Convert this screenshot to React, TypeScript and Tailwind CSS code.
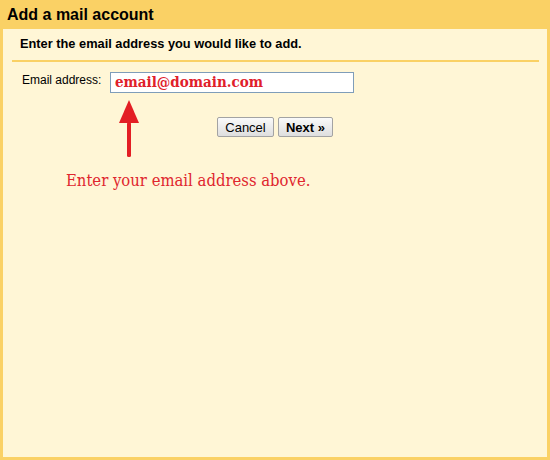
export default function App() {
  return (
    <div className="flex h-[460px] w-[550px] flex-col bg-[#fad165] px-[3px] pb-[3px] font-['Liberation_Sans',Arial,sans-serif] text-black">
      <div className="flex h-[29px] items-center pl-[4px] text-[16px] font-bold">
        Add a mail account
      </div>
      <div className="relative flex-1 bg-[#fff6d6]">
        <div className="ml-[9px] mr-[8px] border-b-2 border-[#fad165] pb-[9px] pl-[8px] pt-[7px] text-[12.8px] font-bold leading-[15px]">
          Enter the email address you would like to add.
        </div>

        <div className="ml-[19px] mt-[10px] flex items-start">
          <span className="w-[88px] pt-[1px] text-[12px] leading-[14px]">Email address:</span>
          <input
            readOnly
            defaultValue="email@domain.com"
            className="h-[21px] w-[244px] border border-[#7f9db9] bg-white px-[4px] font-['DejaVu_Serif_Condensed','DejaVu_Serif',serif] text-[15px] font-bold text-[#e0202a] outline-none"
          />
        </div>

        <div className="mt-[24px] flex justify-center gap-[4px] text-[13px]">
          <button className="h-[20px] w-[57px] rounded-[2px] border border-[#a3a3a3] bg-gradient-to-b from-[#fafafa] to-[#dedede] leading-none">
            Cancel
          </button>
          <button className="h-[20px] w-[55px] rounded-[2px] border border-[#a3a3a3] bg-gradient-to-b from-[#fafafa] to-[#dedede] font-bold leading-none">
            Next »
          </button>
        </div>

        <div className="ml-[63px] mt-[35px] font-['DejaVu_Serif_Condensed','DejaVu_Serif',serif] text-[16.5px] leading-[18px] text-[#e0262e]">
          Enter your email address above.
        </div>

        <svg
          className="absolute left-[116px] top-[71px]"
          width="20"
          height="57"
          viewBox="0 0 20 57"
        >
          <polygon points="10,0 20,23 0,23" fill="#e31e24" />
          <rect x="8" y="22" width="4" height="35" rx="1.5" fill="#e31e24" />
        </svg>
      </div>
    </div>
  );
}
